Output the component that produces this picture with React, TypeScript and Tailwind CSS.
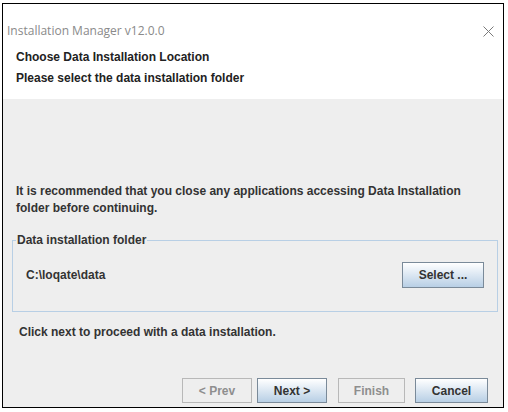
const bodyFont = { fontFamily: '"Liberation Sans", Arial, sans-serif' }

function WizardButton({ label, disabled }: { label: string; disabled?: boolean }) {
  return (
    <button
      className={
        disabled
          ? "h-[25px] border border-[#b8b8b8] bg-[#eeeeee] text-[12px] font-bold text-[#8e8e8e]"
          : "h-[25px] border border-[#7a8a99] bg-gradient-to-b from-white to-[#b8cfe5] text-[12px] font-bold text-[#333333]"
      }
    >
      {label}
    </button>
  )
}

export default function App() {
  return (
    <div className="w-[508px] h-[412px] bg-white pl-[2px] pt-[3px]" style={bodyFont}>
      <div className="w-[502px] h-[405px] border border-black flex flex-col">
        {/* title bar + header */}
        <div className="bg-white pb-[11px]">
          <div className="mt-[17px] h-[20px] flex items-center justify-between pl-[4px] pr-[9px]">
            <span
              className="text-[12px] text-[#8a8a8a]"
              style={{ fontFamily: '"Open Sans", "Noto Sans", sans-serif' }}
            >
              Installation Manager v12.0.0
            </span>
            <svg width="11" height="11" viewBox="0 0 11 11">
              <path d="M0.5 0.5 L10.5 10.5 M10.5 0.5 L0.5 10.5" stroke="#7a7a7a" strokeWidth="1" />
            </svg>
          </div>
          <div className="mt-[6px] pl-[13px] leading-[20px] text-[12px] font-bold text-[#222222]">
            Choose Data Installation Location
          </div>
          <div className="mt-[1px] pl-[13px] leading-[20px] text-[12px] font-bold text-[#222222]">
            Please select the data installation folder
          </div>
        </div>

        {/* body */}
        <div className="flex-1 bg-[#eeeeee] flex flex-col text-[12px] font-bold text-[#333333]">
          <p className="mt-[84px] pl-[13px] leading-[17px]">
            It is recommended that you close any applications accessing Data Installation
            <br />
            folder before continuing.
          </p>

          <fieldset className="mt-[15px] ml-[9px] mr-[5px] h-[80px] border border-[#b8cfe5]">
            <legend className="ml-[3px] px-[1px] leading-[16px]">Data installation folder</legend>
            <div className="flex items-center justify-between pl-[13px] pr-[13px] mt-[14px]">
              <span>C:\loqate\data</span>
              <button className="w-[82px] h-[26px] border border-[#7a8a99] bg-gradient-to-b from-white to-[#b8cfe5] font-bold text-[#333333]">
                Select ...
              </button>
            </div>
          </fieldset>

          <div className="mt-[12px] pl-[16px] leading-[17px]">
            Click next to proceed with a data installation.
          </div>

          <div className="mt-auto mb-[4px] flex justify-end pr-[15px] gap-[5px]">
            <div className="grid grid-cols-[70px_70px] gap-[5px]">
              <WizardButton label="< Prev" disabled />
              <WizardButton label="Next >" />
            </div>
            <div className="ml-[6px] grid grid-cols-[67px_73px] gap-[10px]">
              <WizardButton label="Finish" disabled />
              <WizardButton label="Cancel" />
            </div>
          </div>
        </div>
      </div>
    </div>
  )
}
